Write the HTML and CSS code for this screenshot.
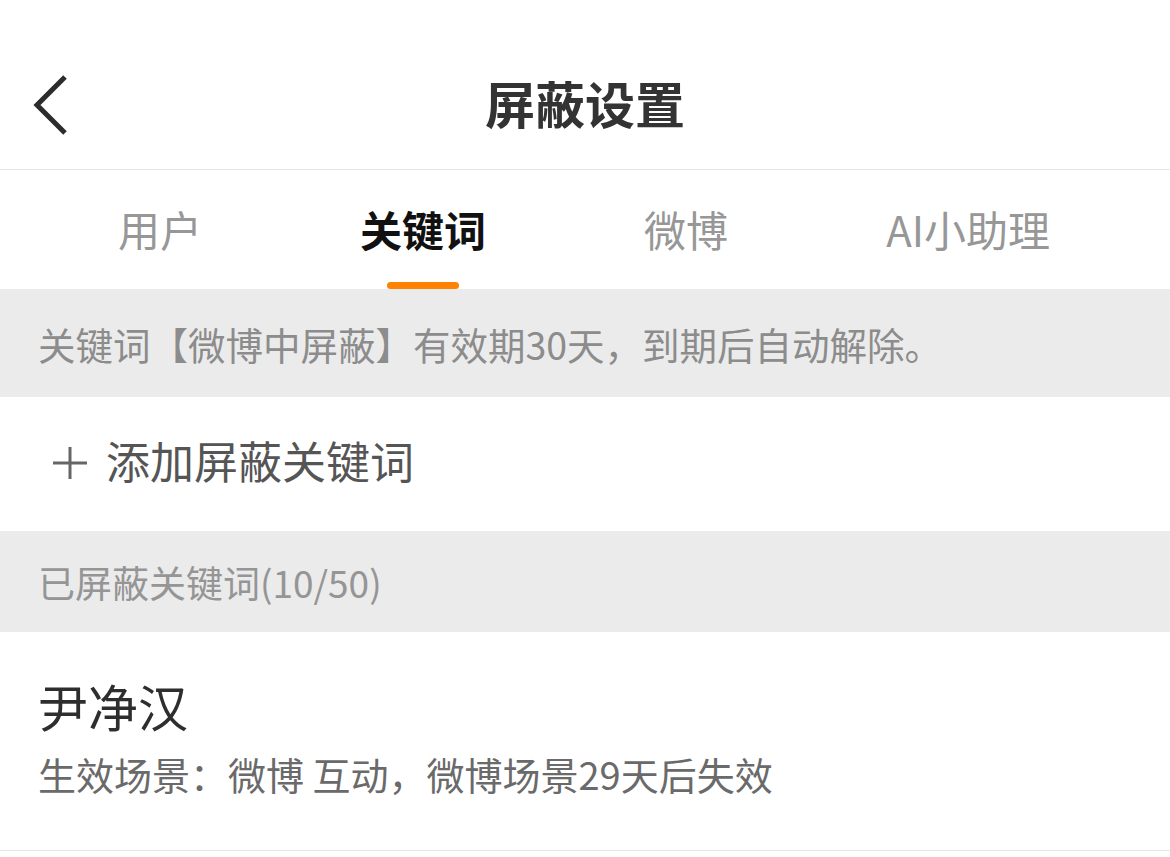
FILE: index.html
```html
<!DOCTYPE html>
<html lang="zh-CN">
<head>
<meta charset="utf-8">
<title>屏蔽设置</title>
<link rel="stylesheet" href="styles.css">
</head>
<body>
<div class="page">
  <header class="header">
    <div class="navbar">
      <div class="nav-left">
        <svg class="back" width="36" height="60" viewBox="0 0 36 60" aria-hidden="true">
          <path d="M32 2 L4 30 L32 58" fill="none" stroke="#2c2c2c" stroke-width="5" stroke-linejoin="miter"/>
        </svg>
      </div>
      <h1 class="title">屏蔽设置</h1>
      <div class="nav-right"></div>
    </div>
  </header>
  <nav class="tabs">
    <div class="tab"><span class="tab-label">用户</span><span class="tab-bar"></span></div>
    <div class="tab tab-active"><span class="tab-label">关键词</span><span class="tab-bar"></span></div>
    <div class="tab"><span class="tab-label">微博</span><span class="tab-bar"></span></div>
    <div class="tab"><span class="tab-label">AI小助理</span><span class="tab-bar"></span></div>
  </nav>
  <div class="notice">关键词【微博中屏蔽】有效期30天，到期后自动解除。</div>
  <div class="add-row">
    <svg class="plus" width="36" height="36" viewBox="0 0 36 36" aria-hidden="true">
      <path d="M18 2 V34 M1 18 H35" fill="none" stroke="#666" stroke-width="3"/>
    </svg>
    <span class="add-text">添加屏蔽关键词</span>
  </div>
  <div class="section-head">已屏蔽关键词(10/50)</div>
  <div class="item">
    <div class="item-name">尹净汉</div>
    <div class="item-sub">生效场景：微博 互动，微博场景29天后失效</div>
  </div>
</div>
</body>
</html>
```

FILE: styles.css
```css
* { box-sizing: border-box; }
html, body { margin: 0; padding: 0; background: #fff; }
body {
  font-family: "Noto Sans CJK SC", "Noto Sans", sans-serif;
  width: 1170px;
  height: 857px;
  overflow: hidden;
}
.page { display: flex; flex-direction: column; }

.header {
  padding-top: 40px;
  border-bottom: 1px solid #e6e6e6;
}
.navbar {
  height: 129px;
  display: grid;
  grid-template-columns: 1fr auto 1fr;
  align-items: center;
}
.nav-left { padding-left: 33px; display: flex; align-items: center; }
.back { display: block; }
.title {
  margin: 0;
  padding-bottom: 6px;
  font-size: 50px;
  font-weight: 700;
  color: #333;
  line-height: 60px;
}

.tabs {
  height: 119px;
  display: flex;
  justify-content: space-between;
  padding: 0 120px 0 118px;
}
.tab {
  display: flex;
  flex-direction: column;
  align-items: center;
}
.tab-label {
  padding-top: 33px;
  font-size: 42px;
  line-height: 52px;
  color: #979797;
}
.tab-bar {
  margin-top: auto;
  width: 72px;
  height: 7px;
  border-radius: 4px;
  background: transparent;
}
.tab-active .tab-label { color: #111; font-weight: 700; }
.tab-active .tab-bar { background: #ff8200; }

.notice {
  height: 108px;
  background: #ebebeb;
  display: flex;
  align-items: center;
  padding-left: 38px;
  font-size: 37.5px;
  color: #8c8c8c;
}

.add-row {
  height: 134px;
  display: flex;
  align-items: center;
  padding-left: 52px;
  padding-bottom: 8px;
  gap: 18px;
}
.plus { display: block; margin-top: 6px; }
.add-text {
  font-size: 44px;
  color: #555;
}

.section-head {
  height: 101px;
  background: #ebebeb;
  display: flex;
  align-items: center;
  padding-left: 38px;
  font-size: 37px;
  color: #959595;
}

.item {
  height: 219px;
  border-bottom: 1px solid #e6e6e6;
  padding: 43px 0 0 38px;
  display: flex;
  flex-direction: column;
}
.item-name {
  font-size: 50px;
  line-height: 60px;
  color: #2e2e2e;
}
.item-sub {
  margin-top: 14px;
  font-size: 38px;
  line-height: 50px;
  color: #6a6a6a;
}
```
